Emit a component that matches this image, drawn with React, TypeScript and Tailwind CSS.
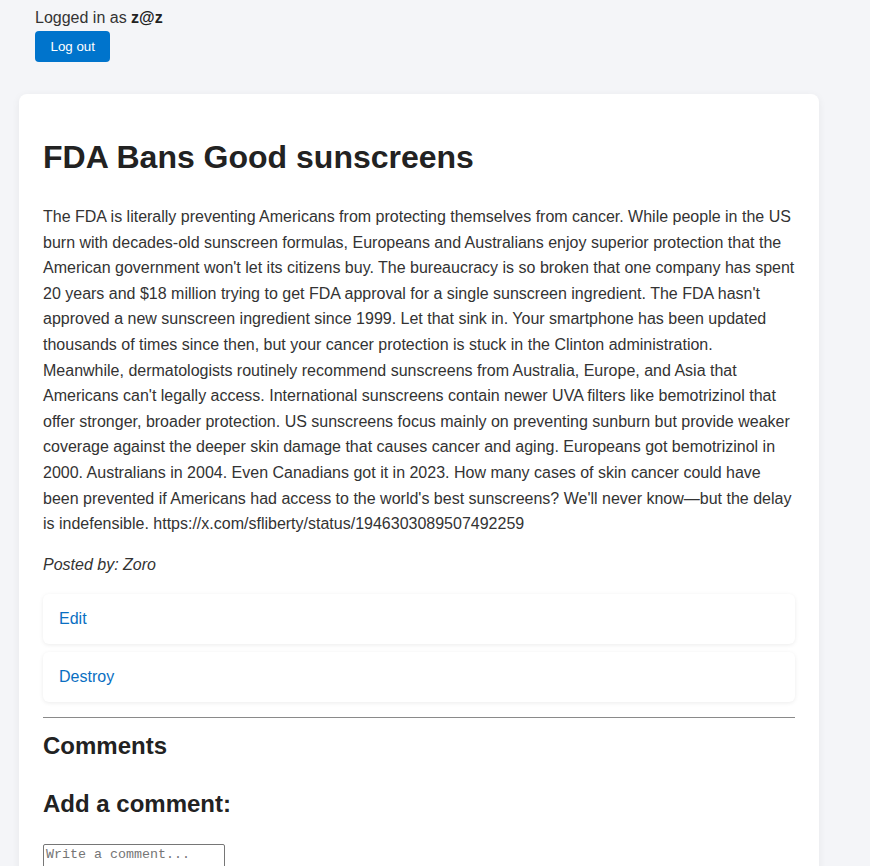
import React from "react";

export default function App() {
  const body =
    "The FDA is literally preventing Americans from protecting themselves from cancer. While people in the US burn with decades-old sunscreen formulas, Europeans and Australians enjoy superior protection that the American government won't let its citizens buy. The bureaucracy is so broken that one company has spent 20 years and $18 million trying to get FDA approval for a single sunscreen ingredient. The FDA hasn't approved a new sunscreen ingredient since 1999. Let that sink in. Your smartphone has been updated thousands of times since then, but your cancer protection is stuck in the Clinton administration. Meanwhile, dermatologists routinely recommend sunscreens from Australia, Europe, and Asia that Americans can't legally access. International sunscreens contain newer UVA filters like bemotrizinol that offer stronger, broader protection. US sunscreens focus mainly on preventing sunburn but provide weaker coverage against the deeper skin damage that causes cancer and aging. Europeans got bemotrizinol in 2000. Australians in 2004. Even Canadians got it in 2023. How many cases of skin cancer could have been prevented if Americans had access to the world's best sunscreens? We'll never know\u2014but the delay is indefensible. https://x.com/sfliberty/status/1946303089507492259";

  return (
    <div
      className="min-h-[866px] bg-[#f4f5f8] text-[#333] overflow-hidden"
      style={{ fontFamily: '"Liberation Sans", Arial, sans-serif' }}
    >
      <div className="px-[35px] pt-[9px]">
        <div className="text-[16px] leading-[18px] text-[#333]">
          Logged in as <strong className="font-bold text-[#222]">z@z</strong>
        </div>
        <button className="mt-[4px] h-[31px] px-[15.5px] rounded-[4px] bg-[#0074cc] text-white text-[13.333px] leading-none">
          Log out
        </button>
      </div>

      <div className="ml-[19px] mt-[32px] w-[800px] bg-white rounded-[8px] shadow-[0_2px_8px_rgba(0,0,0,0.06)] px-[24px] pt-[24px] pb-[40px]">
        <h1 className="mt-[21px] text-[32px] leading-[37px] font-bold text-[#222]">
          FDA Bans Good sunscreens
        </h1>
        <p className="mt-[28px] text-[16px] leading-[25.6px] text-[#333]">{body}</p>
        <p className="mt-[15px] text-[16px] leading-[25.6px] italic text-[#333]">
          Posted by: Zoro
        </p>
        <div className="mt-[17px] flex flex-col gap-[8px]">
          <div className="h-[50px] flex items-center px-[16px] bg-white rounded-[6px] shadow-[0_1px_4px_rgba(0,0,0,0.08)]">
            <a className="text-[16px] text-[#0a6fc2]" href="#">
              Edit
            </a>
          </div>
          <div className="h-[50px] flex items-center px-[16px] bg-white rounded-[6px] shadow-[0_1px_4px_rgba(0,0,0,0.08)]">
            <a className="text-[16px] text-[#0a6fc2]" href="#">
              Destroy
            </a>
          </div>
        </div>
        <div className="mt-[15px] h-px bg-[#8a8a8a]" />
        <h2 className="mt-[14px] text-[24px] leading-[27.6px] font-bold text-[#222]">
          Comments
        </h2>
        <h2 className="mt-[30px] text-[24px] leading-[27.6px] font-bold text-[#222]">
          Add a comment:
        </h2>
        <textarea
          className="mt-[26px] block w-[182px] h-[40px] border border-[#767676] rounded-[2px] p-[2px] text-[13.333px] leading-[15px] placeholder:text-[#757575] resize-none"
          style={{ fontFamily: '"Liberation Mono", "Courier New", monospace' }}
          placeholder="Write a comment..."
        />
      </div>
    </div>
  );
}
